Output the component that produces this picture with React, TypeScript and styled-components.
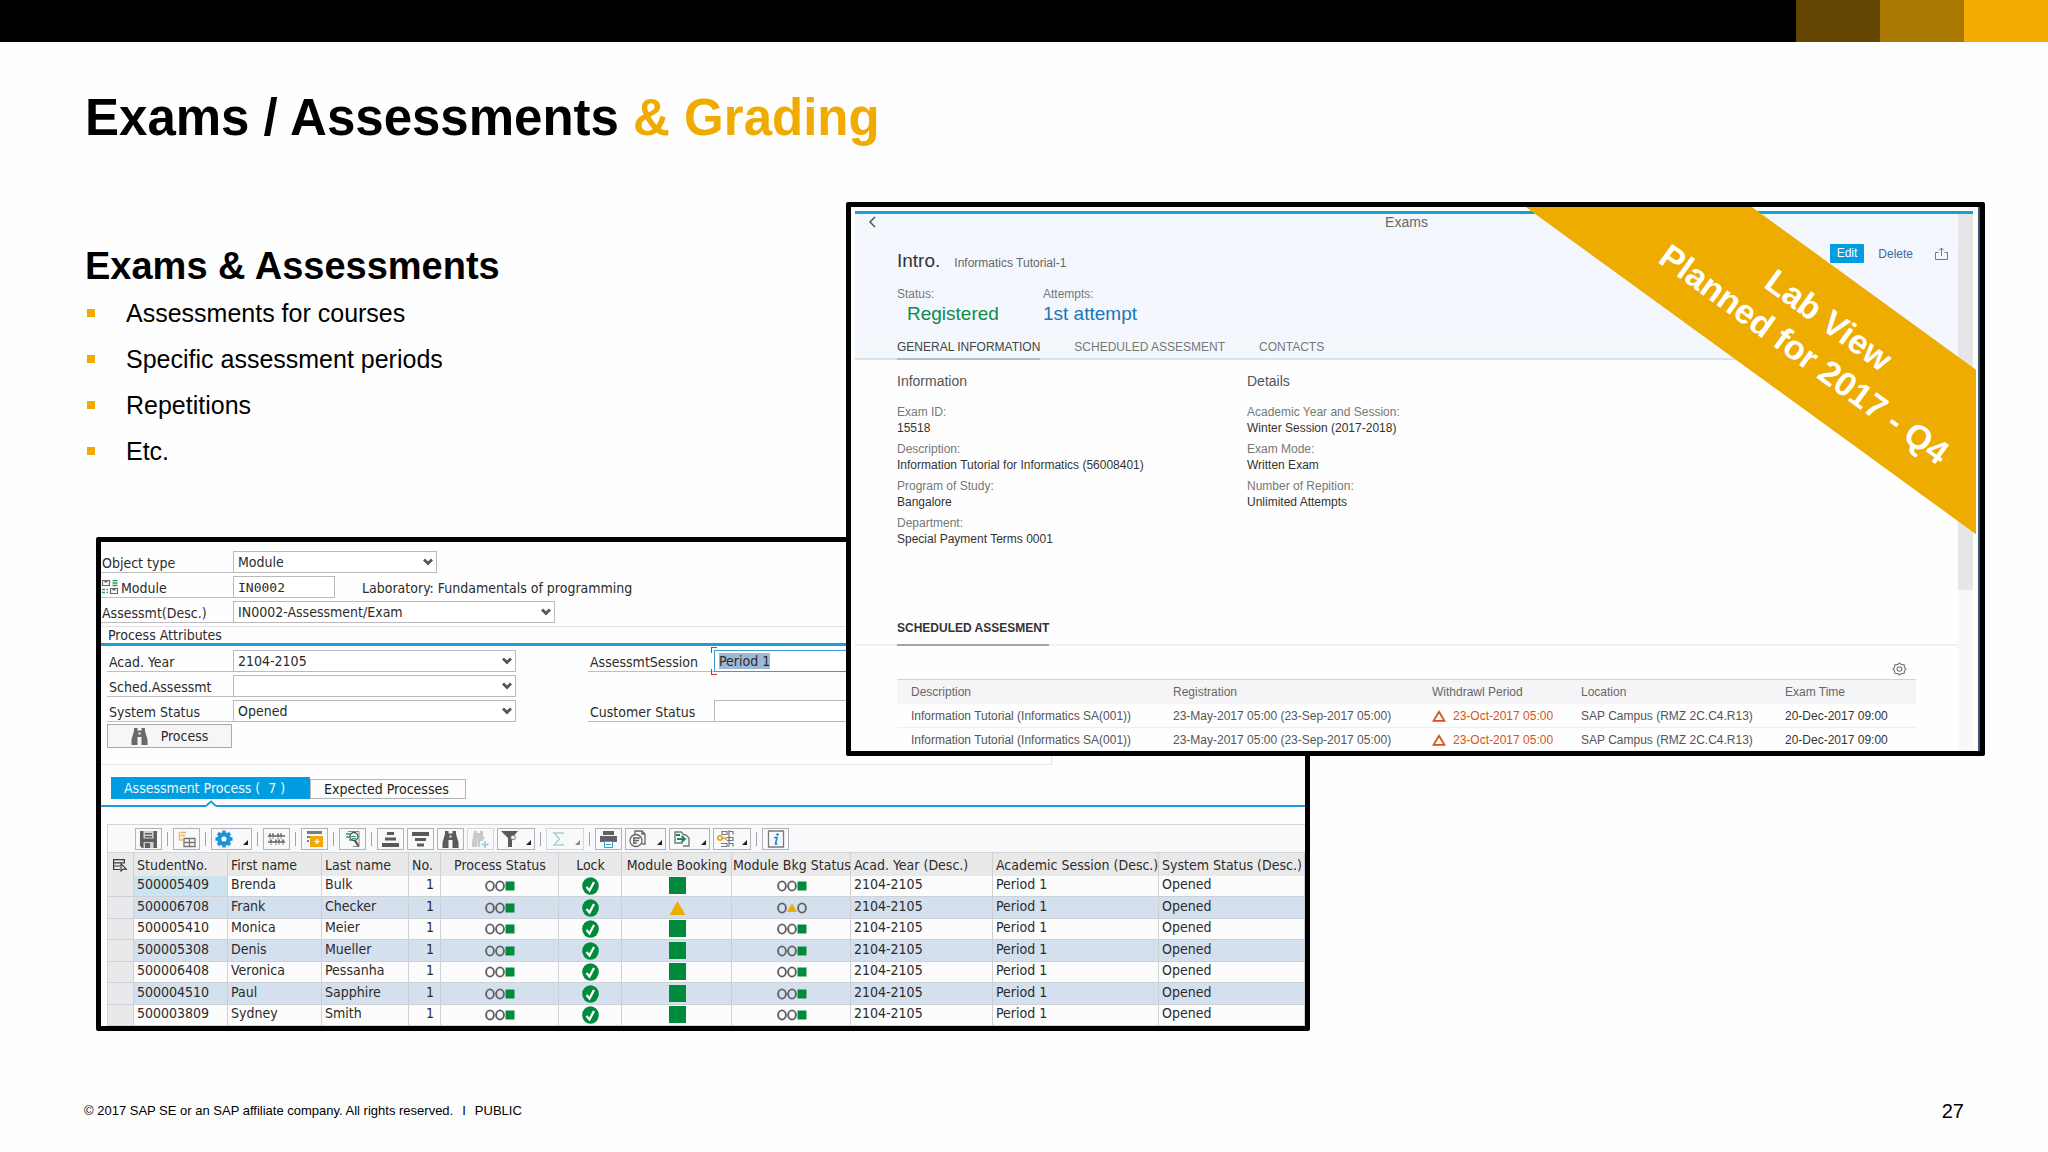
import React, { useEffect, useRef } from "react";
import styled, { createGlobalStyle } from "styled-components";

const GlobalStyle = createGlobalStyle`
  *, *::before, *::after { box-sizing: border-box; }
  body {
    margin: 0;
    background: #fefefe;
    color: #000;
    font-family: "Liberation Sans", Arial, sans-serif;
  }
  h1, h2, h3, p, ul, dl, dd { margin: 0; padding: 0; }
  button, input, select { font: inherit; color: inherit; margin: 0; }
  svg { display: block; flex: none; }
`;

/* ---------- slide ---------- */

const Slide = styled.div`
  display: flex;
  flex-direction: column;
  min-height: 100vh;
`;

const Band = styled.div`
  display: flex;
  justify-content: flex-end;
  height: 42px;
  background: #000;
`;

const Swatch = styled.span<{ $color: string }>`
  width: 84px;
  background: ${(p) => p.$color};
`;

const Title = styled.h1`
  padding: 46px 85px 0;
  font-size: 51px;
  line-height: 60px;
  font-weight: 700;
`;

const Accent = styled.span`
  color: #f0ab00;
`;

const Stage = styled.main`
  display: grid;
  grid-template-columns: 11px minmax(0, 750fr) minmax(0, 464fr) minmax(0, 675fr);
  grid-template-rows: 335px 219px auto;
  padding: 54px 63px 0 85px;
`;

const Topics = styled.section`
  grid-area: 1 / 1 / 2 / 3;
  padding-top: 42px;
`;

const TopicsHeading = styled.h2`
  font-size: 38px;
  line-height: 44px;
`;

const TopicList = styled.ul`
  padding: 2px 0 0 2px;
  list-style: none;
`;

const Topic = styled.li`
  display: flex;
  align-items: center;
  gap: 31px;
  font-size: 25px;
  line-height: 46px;

  &::before {
    content: "";
    width: 8px;
    height: 8px;
    background: #f0ab00;
  }
`;

const Footer = styled.footer`
  display: flex;
  gap: 9px;
  margin-top: auto;
  padding: 0 84px 29px 84px;
  font-size: 13px;
  line-height: 24px;
  white-space: pre;
`;

const PageNumber = styled.span`
  margin-left: auto;
  font-size: 20px;
`;

const Frame = styled.section`
  position: relative;
  overflow: hidden;
  border: 5px solid #000;
  border-radius: 2px;
  background: #fefefe;
`;

/* ---------- exam window ---------- */

const ExamFrame = styled(Frame)`
  grid-area: 1 / 3 / 3 / 5;
  z-index: 1;
  padding: 4px 7px 0 4px;
  font-size: 12px;
  line-height: 16px;
  color: #555;

  &::after {
    content: "";
    position: absolute;
    inset: 0 0 0 auto;
    width: 2px;
    background: #3d5575;
  }
`;

const ExamBody = styled.div`
  display: flex;
  border-top: 3px solid #1c9dd8;
`;

const ExamContent = styled.div`
  flex: 1;
  min-width: 0;
`;

const ScrollTrack = styled.div`
  width: 15px;
  background: #f8f8fa;
`;

const ScrollThumb = styled.div`
  height: 376px;
  background: #e6e6e8;
`;

const ObjectHeader = styled.header`
  border-bottom: 2px solid #dae3e5;
  background: linear-gradient(#f2f7fc, #f4f7fe 30%, #f4f7fe 80%, #f2f9fb);
`;

const NavBar = styled.div`
  display: grid;
  grid-template-columns: 1fr auto 1fr;
  height: 30px;
`;

const BackButton = styled.button`
  justify-self: start;
  align-self: start;
  padding: 2px 13px;
  border: 0;
  background: none;
  color: #555;
`;

const NavTitle = styled.span`
  font-size: 14px;
  color: #666;
`;

const TitleRow = styled.div`
  display: flex;
  align-items: flex-start;
  padding: 0 10px 0 42px;
`;

const ObjectTitle = styled.h2`
  padding-top: 5px;
  font-size: 19px;
  line-height: 24px;
  font-weight: 400;
  color: #333;

  small {
    margin-left: 14px;
    font-size: 12px;
    color: #666;
  }
`;

const Actions = styled.div`
  display: flex;
  align-items: center;
  gap: 14px;
  margin-left: auto;
`;

const EditButton = styled.button`
  height: 19px;
  padding: 0 7px;
  border: 0;
  border-radius: 1px;
  background: #009de0;
  color: #fff;
  line-height: 19px;
`;

const PlainButton = styled.button`
  padding: 0;
  border: 0;
  background: none;
  color: #3a6ba0;
`;

const IconButton = styled(PlainButton)`
  margin-left: 8px;
  color: #777;
`;

const Facets = styled.dl`
  display: grid;
  grid-template-columns: 146px auto;
  grid-template-rows: 16px 24px;
  grid-auto-flow: column;
  justify-content: start;
  padding: 11px 0 0 42px;

  dt { color: #777; }
`;

const FacetValue = styled.dd<{ $color: string; $inset?: boolean }>`
  padding-left: ${(p) => (p.$inset ? 10 : 0)}px;
  font-size: 19px;
  line-height: 24px;
  color: ${(p) => p.$color};
`;

const Anchors = styled.nav`
  display: flex;
  gap: 34px;
  padding: 13px 0 0 42px;
`;

const Anchor = styled.a<{ $active?: boolean }>`
  margin-bottom: -2px;
  padding-bottom: 3px;
  border-bottom: 2px solid ${(p) => (p.$active ? "#b4bec2" : "transparent")};
  color: ${(p) => (p.$active ? "#444" : "#777")};
  text-decoration: none;
`;

const InfoColumns = styled.div`
  display: grid;
  grid-template-columns: 350px 1fr;
  min-height: 260px;
  padding: 13px 0 0 42px;
`;

const InfoHeading = styled.h3`
  margin-bottom: 15px;
  font-size: 14px;
  line-height: 16px;
  font-weight: 400;
  color: #555;
`;

const InfoList = styled.dl`
  dt { color: #777; }
  dd { margin-bottom: 5px; color: #333; }
`;

const SectionHead = styled.div`
  display: flex;
  padding-left: 42px;
  border-bottom: 2px solid #f1f1f3;
`;

const SectionTitle = styled.h3`
  margin-bottom: -2px;
  padding-bottom: 8px;
  border-bottom: 2px solid #a3a3a3;
  font-size: 12px;
  line-height: 16px;
  color: #333;
`;

const TableTools = styled.div`
  display: flex;
  align-items: flex-end;
  justify-content: flex-end;
  height: 33px;
  padding: 0 51px 3px 0;
`;

const ExamTable = styled.table`
  width: calc(100% - 84px);
  margin-left: 42px;
  border-spacing: 0;
  table-layout: fixed;
  white-space: nowrap;

  th {
    height: 25px;
    padding: 0 0 0 14px;
    border-top: 1px solid #d2d2d4;
    background: #f5f5f8;
    font-weight: 400;
    text-align: left;
    color: #666;
  }
  td {
    height: 24px;
    padding: 0 0 0 14px;
    border-bottom: 1px solid #efeff1;
  }
  td:last-child { color: #333; }
`;

const Warning = styled.span`
  display: flex;
  align-items: center;
  gap: 7px;
  color: #d4541a;
`;

const RibbonClip = styled.div`
  position: absolute;
  inset: 0 4px 0 0;
  overflow: hidden;
  pointer-events: none;
`;

const Ribbon = styled.p`
  position: absolute;
  top: 63px;
  right: -191px;
  display: flex;
  align-items: center;
  justify-content: center;
  width: 700px;
  height: 133px;
  background: #eeab00;
  color: #fff;
  font-size: 34px;
  line-height: 42px;
  font-weight: 700;
  text-align: center;
  transform: rotate(36deg);
`;

/* ---------- process window ---------- */

const ProcessFrame = styled(Frame)`
  grid-area: 2 / 2 / 4 / 4;
  padding-top: 9px;
  font-family: "DejaVu Sans Condensed", "DejaVu Sans", Tahoma, sans-serif;
  font-size: 14px;
  line-height: 16px;
  color: #2b2b2b;
  white-space: nowrap;
`;

const FieldStack = styled.div<{ $inset?: boolean }>`
  display: flex;
  flex-direction: column;
  gap: 3px;
  padding-left: ${(p) => (p.$inset ? 6 : 0)}px;
`;

const FieldRow = styled.div`
  display: flex;
  height: 22px;
`;

const FieldLabel = styled.label<{ $width: number; $inset?: boolean }>`
  display: flex;
  align-items: center;
  gap: 3px;
  width: ${(p) => p.$width}px;
  padding-left: ${(p) => (p.$inset ? 2 : 1)}px;
  padding-top: 2px;
  border-bottom: 1px solid #bdbdc2;
`;

const SelectBox = styled.span<{ $width: number }>`
  display: grid;
  align-items: center;
  width: ${(p) => p.$width}px;

  select {
    grid-area: 1 / 1;
    width: 100%;
    height: 22px;
    padding: 0 4px;
    border: 1px solid #b9b9be;
    border-radius: 0;
    background: #fff;
    appearance: none;
  }
  svg {
    grid-area: 1 / 1;
    justify-self: end;
    margin-right: 4px;
    pointer-events: none;
  }
`;

const TextInput = styled.input<{ $width: number }>`
  width: ${(p) => p.$width}px;
  height: 22px;
  padding: 0 4px;
  border: 1px solid #b9b9be;
  border-radius: 0;
  background: #fff;
`;

const CodeInput = styled(TextInput)`
  font-family: "DejaVu Sans Mono", "Liberation Mono", monospace;
  font-size: 13px;
`;

const FocusBox = styled.span`
  position: relative;
  display: flex;

  &::before, &::after {
    content: "";
    position: absolute;
    left: -3px;
    width: 6px;
    height: 6px;
    border-left: 1px solid #d9302c;
  }
  &::before { top: -3px; border-top: 1px solid #d9302c; }
  &::after { bottom: -3px; border-bottom: 1px solid #d9302c; }

  input {
    border-color: #3d9bd3;
    outline: 0;
  }
  input::selection { background: #9db8d8; color: #2b2b2b; }
`;

const FieldNote = styled.span`
  padding: 4px 0 0 27px;
`;

const Spacer = styled.span`
  width: 72px;
`;

const AttributeBox = styled.div`
  width: 951px;
  height: 139px;
  margin-top: 3px;
  border: 1px solid #e4e2e8;
  border-left: 0;
`;

const BoxTitle = styled.h3`
  margin-bottom: 4px;
  padding-left: 7px;
  border-bottom: 3px solid #1c9dd8;
  font-size: 14px;
  line-height: 16px;
  font-weight: 400;
`;

const ProcessButton = styled.button`
  display: flex;
  align-items: center;
  justify-content: center;
  gap: 13px;
  width: 125px;
  height: 24px;
  margin: 2px 0 0 6px;
  padding: 0;
  border: 1px solid #a9a9ad;
  background: #f6f5f8;
`;

const TabBar = styled.div`
  display: flex;
  align-items: flex-end;
  height: 35px;
  padding: 0 0 1px 10px;
`;

const Tab = styled.button<{ $active?: boolean }>`
  height: ${(p) => (p.$active ? 22 : 20)}px;
  width: ${(p) => (p.$active ? 199 : 156)}px;
  padding: 0 0 0 13px;
  border: ${(p) => (p.$active ? 0 : "1px solid #b4b4b8")};
  background: ${(p) => (p.$active ? "#009de0" : "#fdfdfd")};
  color: ${(p) => (p.$active ? "#eef8fd" : "#1e1e1e")};
  text-align: left;
  white-space: pre;
`;

const TabRule = styled.div`
  display: flex;
  align-items: flex-end;
  height: 7px;

  &::before, &::after {
    content: "";
    height: 2px;
    background: #1c9dd8;
  }
  &::before { width: 105px; }
  &::after { flex: 1; }
`;

const Grid = styled.div`
  margin: 17px 0 0 6px;
  border-top: 1px solid #d3d5d8;
  border-left: 1px solid #d3d5d8;
  background: #f8f9fb;
`;

const Toolbar = styled.div`
  display: flex;
  gap: 3px;
  height: 27px;
  padding: 3px 0 0 27px;
`;

const ToolButton = styled.button<{ $menu?: boolean; $wide?: boolean }>`
  position: relative;
  display: flex;
  align-items: center;
  justify-content: ${(p) => (p.$menu ? "flex-start" : "center")};
  width: ${(p) => (p.$menu ? (p.$wide ? 41 : 38) : 27)}px;
  height: 22px;
  padding: ${(p) => (p.$menu ? "0 0 0 3px" : 0)};
  border: 1px solid #b2b2b6;
  background: #f8f9fb;

  &:disabled { opacity: 0.5; }
  &::after {
    content: "";
    display: ${(p) => (p.$menu ? "block" : "none")};
    position: absolute;
    right: 3px;
    bottom: 4px;
    border-left: 5px solid transparent;
    border-bottom: 5px solid #222;
  }
`;

const Divider = styled.span`
  width: 1px;
  height: 14px;
  margin: 4px 2px 0;
  background: #a3a3a8;
`;

const StudentTable = styled.table`
  width: 100%;
  border-collapse: separate;
  border-spacing: 0;
  table-layout: fixed;
  text-align: left;

  th {
    height: 24px;
    padding: 1px 0 0 3px;
    border-top: 1px solid #d3d5d8;
    border-right: 1px solid #cfd0d3;
    background: #e9e9ea;
    font-weight: 400;
  }
  td {
    height: 21px;
    padding: 0 0 4px 3px;
    border-right: 1px solid #cdd0d5;
    border-bottom: 1px solid #cdd0d5;
    background: #fcfcfc;
  }
  tr:nth-child(even) td {
    height: 22px;
    background: #d5e0ef;
  }
  tbody tr td:first-child, tbody tr:nth-child(even) td:first-child {
    background: #e9e9eb;
  }
  tbody tr:first-child td:nth-child(2) { background: #cbe3ee; }
  th:nth-child(n + 6):nth-child(-n + 9) { padding-left: 1px; text-align: center; }
  th:nth-child(9) { padding-left: 0; }
  td:nth-child(5) { padding-right: 6px; text-align: right; }
  td:nth-child(n + 6):nth-child(-n + 9) { padding: 0 0 0 1px; }
  td svg { margin: 0 auto; }
  th:first-child { padding-left: 5px; }
`;

/* ---------- icons ---------- */

const Chevron = () => (
  <svg width="10" height="8" viewBox="0 0 10 8" fill="none" stroke="#555" strokeWidth="2.8">
    <path d="M1 1.5l4 4 4-4" />
  </svg>
);

const BackIcon = () => (
  <svg width="8" height="12" viewBox="0 0 8 12" fill="none" stroke="currentColor" strokeWidth="1.5">
    <path d="M7 1L2 6l5 5" />
  </svg>
);

const ShareIcon = () => (
  <svg width="13" height="13" viewBox="0 0 13 13" fill="none" stroke="currentColor" strokeWidth="1">
    <path d="M3.5 5.5h-3v7h12v-7h-3M6.5 9V1M4 3.5L6.5 1 9 3.5" />
  </svg>
);

const SettingsIcon = () => (
  <svg width="15" height="14" viewBox="0 0 24 24" preserveAspectRatio="none" fill="none" stroke="currentColor" strokeWidth="1.800">
    <circle cx="12" cy="12" r="3.800" />
    <path d="M12 1.500l2.700 2.600 4.700.5.600 4.700 2.500 2.700-2.500 2.700-.6 4.700-4.700.5L12 22.500l-2.700-2.600-4.700-.5-.6-4.700L1.500 12 4 9.300l.6-4.700 4.700-.5z" />
  </svg>
);

const WarningIcon = () => (
  <svg width="14" height="12" viewBox="0 0 14 12" fill="none" stroke="currentColor" strokeWidth="1.8">
    <path d="M7 1.8l5.4 9H1.6z" />
  </svg>
);

const ModuleIcon = () => (
  <svg width="16" height="15" viewBox="0 0 16 15" fill="none" stroke="#666">
    <path d="M.5 .5h7v5h-7zM8.500 8.500h7v5h-7z" strokeWidth="1.200" />
    <path d="M2.500 1.500h3M10.500 9.500h3" strokeWidth="2" />
    <path d="M10.500 .5h5M10.500 3h5M10.500 5.500h5M0 9.500h3M0 12.500h3M4.500 9.500h1.500M4.500 12.500h1.500" stroke="#2f9b62" strokeWidth="1.300" />
  </svg>
);

const Binoculars = ({ color = "#6a6a6c" }: { color?: string }) => (
  <svg width="17" height="17" viewBox="0 0 17 17" fill={color}>
    <path d="M3 0h3.500v2.500h4V0H14v3l2.500 8.500V17h-6V9h-4v8h-6v-5.500L3 3z" />
    <path d="M7.500 4.500h2v2h-2z" fill="#f6f5f8" />
  </svg>
);

const SaveIcon = () => (
  <svg width="17" height="17" viewBox="0 0 17 17">
    <path d="M0 0h17v17H2l-2-2z" fill="#5e5e60" />
    <path d="M3.500 0h10v7.500h-10zM3.500 11h10v6h-10z" fill="#cfd0d2" />
    <path d="M5 2h7v1.500H5zM5 5h7v1.500H5zM5 12h5v5H5z" fill="#5e5e60" />
  </svg>
);

const DetailIcon = () => (
  <svg width="18" height="17" viewBox="0 0 18 17" fill="none">
    <path d="M1.500 1v9" stroke="#f2c26a" strokeWidth="1.800" />
    <path d="M3 1.500h5M3 4.500h4M3 9h2" stroke="#eeb14a" strokeWidth="1.300" />
    <path d="M6 7.500h11v8H6zM6 11.500h11M11.500 7.500v8" stroke="#777" strokeWidth="1.300" />
  </svg>
);

const GearIcon = () => (
  <svg width="18" height="18" viewBox="0 0 18 18">
    <circle cx="9" cy="9" r="4.700" fill="none" stroke="#1a93d6" strokeWidth="4.200" />
    <g stroke="#1a93d6" strokeWidth="3.400">
      <path d="M9 .5v3M9 14.500v3M.5 9h3M14.500 9h3M3 3l2 2M13 13l2 2M15 3l-2 2M5 13l-2 2" />
    </g>
  </svg>
);

const SortListIcon = () => (
  <svg width="17" height="14" viewBox="0 0 17 14" fill="none" stroke="#666" strokeWidth="1.300">
    <path d="M0 4h17M0 10h17" />
    <path d="M2 1.500v5M5 1.500v5M10 1.500v5M13 1.500v5M3 7.500v5M8 7.500v5M11 7.500v5M15 7.500v5" strokeWidth="1.800" strokeDasharray="1.500 .8" />
  </svg>
);

const LayoutIcon = () => (
  <svg width="18" height="18" viewBox="0 0 18 18">
    <path d="M1 1h15v3H1zM1 6h3v2H1zM1 10h2v2H1z" fill="#7b7b7d" />
    <path d="M4 6h13v11H4z" fill="#f0a90b" />
    <path d="M11 9v5M8.500 11.500h5" stroke="#fff" strokeWidth="1.500" />
  </svg>
);

const DetailsSearchIcon = () => (
  <svg width="18" height="18" viewBox="0 0 18 18" fill="none">
    <path d="M4 1.500h11v15H9" stroke="#888" />
    <path d="M2 4h5M2 7h4M5 10h4" stroke="#2d9a61" strokeWidth="1.300" />
    <circle cx="10" cy="6.500" r="4" stroke="#555" strokeWidth="1.300" />
    <path d="M10.500 10l4 6" stroke="#555" strokeWidth="2.200" />
    <path d="M7 6.500h5M8 8.500h4" stroke="#2d9a61" />
  </svg>
);

const SortAscIcon = () => (
  <svg width="17" height="15" viewBox="0 0 17 15" fill="#5a5a5c">
    <path d="M5 0h7v3H5zM3 5.500h11v3H3zM0 11h17v4H0z" />
  </svg>
);

const SortDescIcon = () => (
  <svg width="17" height="15" viewBox="0 0 17 15" fill="#5a5a5c">
    <path d="M0 0h17v4H0zM3 6h11v3H3zM5 11.500h7v3H5z" />
  </svg>
);

const FindNextIcon = () => (
  <svg width="18" height="17" viewBox="0 0 18 17" fill="#9b9b9d">
    <path d="M2 0h3v2h3V0h3v4l2 4h-2v2H8v6H6V8l-1 8H0v-5z" />
    <path d="M13 10v7M9.500 13.500h7" stroke="#3bb0c9" strokeWidth="1.800" />
  </svg>
);

const FilterIcon = () => (
  <svg width="17" height="18" viewBox="0 0 17 18">
    <path d="M0 1h17L11 8v9H7V8z" fill="#5a5a5c" />
    <circle cx="12" cy="7.500" r="2.300" fill="#f8f9fb" stroke="#777" />
  </svg>
);

const SumIcon = () => (
  <svg width="18" height="16" viewBox="0 0 18 16" fill="none" stroke="#5cab98" strokeWidth="1.400">
    <path d="M13 3.500V2H4l5.500 6L4 14h9v-1.500" />
  </svg>
);

const PrintIcon = () => (
  <svg width="17" height="17" viewBox="0 0 17 17" fill="#626264">
    <path d="M3 0h11v4H3zM0 5h17v6H0z" />
    <path d="M4.500 10.500h8v6h-8z" fill="#fff" stroke="#3a9bd0" />
    <path d="M6 13.500h5" stroke="#3a9bd0" />
    <path d="M2 4.500h13" stroke="#f8f9fb" />
  </svg>
);

const ViewIcon = () => (
  <svg width="18" height="18" viewBox="0 0 18 18" fill="none" stroke="#666" strokeWidth="1.300">
    <path d="M6 4V1h7l3 3v10h-3M13 1v3h3" />
    <circle cx="7" cy="10.500" r="6" />
    <path d="M4 8h7M4 10.500h6M4 13h4M5 7v7" />
  </svg>
);

const ExportIcon = () => (
  <svg width="18" height="18" viewBox="0 0 18 18" fill="none">
    <path d="M10 13H2V2h6l3 3M11 5h2l3 3v8h-6" stroke="#777" strokeWidth="1.400" />
    <path d="M3 5h4M4 9h7M8.500 6l3.500 3-3.500 3" stroke="#188a4d" strokeWidth="1.800" />
  </svg>
);

const LayoutSelectIcon = () => (
  <svg width="18" height="18" viewBox="0 0 18 18" fill="none">
    <path d="M5 1.500h5v3H5zM12 1.500h4v3M10 7.500h6v3h-6M4 16.500h6v-3H4M12 13.500h4v3M12 0v17" stroke="#777" strokeWidth="1.200" />
    <circle cx="3" cy="8" r="2.200" stroke="#eba020" strokeWidth="1.700" />
    <path d="M5 8h4v2" stroke="#eba020" strokeWidth="1.700" />
  </svg>
);

const InfoIcon = () => (
  <svg width="18" height="18" viewBox="0 0 18 18" fill="none">
    <path d="M1.500 1h15v16h-15z" stroke="#7a7a7d" strokeWidth="1.300" />
    <path d="M8 7.500h2L8.500 14h2M7 7.500h2" stroke="#1b8ccb" strokeWidth="1.700" />
    <circle cx="10.500" cy="4.500" r="1.300" fill="#1b8ccb" />
  </svg>
);

const SelectAllIcon = () => (
  <svg width="14" height="13" viewBox="0 0 14 13" fill="none" stroke="#3c3c3e" strokeWidth="1.200">
    <path d="M7 10.500H.6V.6h10.800v4M.6 3.800h10.800M.6 7H7" />
    <path d="M8 5v7l2-2 3.500.3z" fill="#fff" />
  </svg>
);

const LockIcon = () => (
  <svg width="17" height="18" viewBox="0 0 17 18">
    <ellipse cx="8.500" cy="9" rx="8.300" ry="8.700" fill="#008a3b" />
    <path d="M4.500 10l3 3.500L12 5" fill="none" stroke="#fff" strokeWidth="2.300" />
  </svg>
);

const BookingIcon = ({ warn }: { warn?: boolean }) => (
  <svg width="17" height="18" viewBox="0 0 17 18">
    {warn ? <path d="M8.500 2L16.500 16H.5z" fill="#f0ab00" /> : <path d="M0 0h17v17H0z" fill="#008a3b" />}
  </svg>
);

const LightsIcon = ({ warn }: { warn?: boolean }) => (
  <svg width="30" height="12" viewBox="0 0 30 12" fill="none" stroke="#626264" strokeWidth="1.900">
    <ellipse cx="5" cy="6" rx="3.900" ry="4.600" />
    {warn ? (
      <>
        <path d="M15 1.500l5 8.500H10z" fill="#f0ab00" stroke="none" />
        <ellipse cx="25" cy="6" rx="3.900" ry="4.600" />
      </>
    ) : (
      <>
        <ellipse cx="15" cy="6" rx="3.900" ry="4.600" />
        <path d="M20.500 1.500h9v9h-9z" fill="#008a3b" stroke="none" />
      </>
    )}
  </svg>
);

/* ---------- data ---------- */

const topics = ["Assessments for courses", "Specific assessment periods", "Repetitions", "Etc."];

const information = [
  ["Exam ID:", "15518"],
  ["Description:", "Information Tutorial for Informatics (56008401)"],
  ["Program of Study:", "Bangalore"],
  ["Department:", "Special Payment Terms 0001"],
];

const details = [
  ["Academic Year and Session:", "Winter Session (2017-2018)"],
  ["Exam Mode:", "Written Exam"],
  ["Number of Repition:", "Unlimited Attempts"],
];

const students = [
  ["500005409", "Brenda", "Bulk"],
  ["500006708", "Frank", "Checker"],
  ["500005410", "Monica", "Meier"],
  ["500005308", "Denis", "Mueller"],
  ["500006408", "Veronica", "Pessanha"],
  ["500004510", "Paul", "Sapphire"],
  ["500003809", "Sydney", "Smith"],
];

const studentColumns = [
  "StudentNo.", "First name", "Last name", "No.", "Process Status", "Lock", "Module Booking",
  "Module Bkg Status", "Acad. Year (Desc.)", "Academic Session (Desc.)", "System Status (Desc.)",
];

const studentWidths = [26, 94, 94, 87, 32, 118, 63, 110, 119, 142, 166];

type Tool = { name: string; icon: React.ReactNode; menu?: boolean; wide?: boolean; off?: boolean } | null;

const tools: Tool[] = [
  { name: "Save", icon: <SaveIcon /> },
  null,
  { name: "Details", icon: <DetailIcon /> },
  null,
  { name: "Settings", icon: <GearIcon />, menu: true, wide: true },
  null,
  { name: "Columns", icon: <SortListIcon /> },
  null,
  { name: "Add layout", icon: <LayoutIcon /> },
  null,
  { name: "Inspect", icon: <DetailsSearchIcon /> },
  null,
  { name: "Sort ascending", icon: <SortAscIcon /> },
  { name: "Sort descending", icon: <SortDescIcon /> },
  { name: "Find", icon: <Binoculars color="#5a5a5c" /> },
  { name: "Find next", icon: <FindNextIcon />, off: true },
  { name: "Filter", icon: <FilterIcon />, menu: true },
  null,
  { name: "Total", icon: <SumIcon />, menu: true, off: true },
  null,
  { name: "Print", icon: <PrintIcon /> },
  { name: "Views", icon: <ViewIcon />, menu: true, wide: true },
  { name: "Export", icon: <ExportIcon />, menu: true, wide: true },
  { name: "Choose layout", icon: <LayoutSelectIcon />, menu: true },
  null,
  { name: "Information", icon: <InfoIcon /> },
];

/* ---------- parts ---------- */

const Dropdown = ({ id, value, width }: { id: string; value: string; width: number }) => (
  <SelectBox $width={width}>
    <select id={id} defaultValue={value}>
      <option value={value}>{value}</option>
    </select>
    <Chevron />
  </SelectBox>
);

const InfoBlock = ({ title, items }: { title: string; items: string[][] }) => (
  <div>
    <InfoHeading>{title}</InfoHeading>
    <InfoList>
      {items.map(([label, value]) => (
        <React.Fragment key={label}>
          <dt>{label}</dt>
          <dd>{value}</dd>
        </React.Fragment>
      ))}
    </InfoList>
  </div>
);

const ExamWindow = () => (
  <ExamFrame aria-label="Exams">
    <ExamBody>
      <ExamContent>
        <ObjectHeader>
          <NavBar>
            <BackButton aria-label="Back"><BackIcon /></BackButton>
            <NavTitle>Exams</NavTitle>
          </NavBar>
          <TitleRow>
            <ObjectTitle>Intro.<small>Informatics Tutorial-1</small></ObjectTitle>
            <Actions>
              <EditButton>Edit</EditButton>
              <PlainButton>Delete</PlainButton>
              <IconButton aria-label="Share"><ShareIcon /></IconButton>
            </Actions>
          </TitleRow>
          <Facets>
            <dt>Status:</dt>
            <FacetValue $color="#118a48" $inset>Registered</FacetValue>
            <dt>Attempts:</dt>
            <FacetValue $color="#1a76b5">1st attempt</FacetValue>
          </Facets>
          <Anchors>
            <Anchor href="#general" $active>GENERAL INFORMATION</Anchor>
            <Anchor href="#scheduled">SCHEDULED ASSESMENT</Anchor>
            <Anchor href="#contacts">CONTACTS</Anchor>
          </Anchors>
        </ObjectHeader>
        <InfoColumns id="general">
          <InfoBlock title="Information" items={information} />
          <InfoBlock title="Details" items={details} />
        </InfoColumns>
        <SectionHead id="scheduled">
          <SectionTitle>SCHEDULED ASSESMENT</SectionTitle>
        </SectionHead>
        <TableTools>
          <IconButton aria-label="Table settings"><SettingsIcon /></IconButton>
        </TableTools>
        <ExamTable>
          <colgroup>
            <col width="262" /><col width="259" /><col width="149" /><col width="204" /><col />
          </colgroup>
          <thead>
            <tr>
              <th>Description</th><th>Registration</th><th>Withdrawl Period</th><th>Location</th><th>Exam Time</th>
            </tr>
          </thead>
          <tbody>
            {[1, 2].map((n) => (
              <tr key={n}>
                <td>Information Tutorial (Informatics SA(001))</td>
                <td>23-May-2017 05:00 (23-Sep-2017 05:00)</td>
                <td><Warning><WarningIcon />23-Oct-2017 05:00</Warning></td>
                <td>SAP Campus (RMZ 2C.C4.R13)</td>
                <td>20-Dec-2017 09:00</td>
              </tr>
            ))}
          </tbody>
        </ExamTable>
      </ExamContent>
      <ScrollTrack><ScrollThumb /></ScrollTrack>
    </ExamBody>
    <RibbonClip>
      <Ribbon><span>Lab View<br />Planned for 2017 - Q4</span></Ribbon>
    </RibbonClip>
  </ExamFrame>
);

const ProcessWindow = () => {
  const session = useRef<HTMLInputElement>(null);
  useEffect(() => {
    session.current?.focus();
    session.current?.select();
  }, []);

  return (
    <ProcessFrame aria-label="Assessment process">
      <FieldStack>
        <FieldRow>
          <FieldLabel htmlFor="object-type" $width={132}>Object type</FieldLabel>
          <Dropdown id="object-type" value="Module" width={204} />
        </FieldRow>
        <FieldRow>
          <FieldLabel htmlFor="module" $width={132}><ModuleIcon />Module</FieldLabel>
          <CodeInput id="module" defaultValue="IN0002" $width={102} />
          <FieldNote>Laboratory: Fundamentals of programming</FieldNote>
        </FieldRow>
        <FieldRow>
          <FieldLabel htmlFor="assessment" $width={132}>Assessmt(Desc.)</FieldLabel>
          <Dropdown id="assessment" value="IN0002-Assessment/Exam" width={322} />
        </FieldRow>
      </FieldStack>
      <AttributeBox>
        <BoxTitle>Process Attributes</BoxTitle>
        <FieldStack $inset>
          <FieldRow>
            <FieldLabel htmlFor="year" $width={126} $inset>Acad. Year</FieldLabel>
            <Dropdown id="year" value="2104-2105" width={283} />
            <Spacer />
            <FieldLabel htmlFor="session" $width={126} $inset>AssessmtSession</FieldLabel>
            <FocusBox>
              <TextInput id="session" ref={session} defaultValue="Period 1" $width={300} />
            </FocusBox>
          </FieldRow>
          <FieldRow>
            <FieldLabel htmlFor="scheduled-assessment" $width={126} $inset>Sched.Assessmt</FieldLabel>
            <Dropdown id="scheduled-assessment" value="" width={283} />
          </FieldRow>
          <FieldRow>
            <FieldLabel htmlFor="system-status" $width={126} $inset>System Status</FieldLabel>
            <Dropdown id="system-status" value="Opened" width={283} />
            <Spacer />
            <FieldLabel htmlFor="customer-status" $width={126} $inset>Customer Status</FieldLabel>
            <TextInput id="customer-status" $width={300} />
          </FieldRow>
        </FieldStack>
        <ProcessButton><Binoculars />Process</ProcessButton>
      </AttributeBox>
      <TabBar>
        <Tab $active>{"Assessment Process (  7 )"}</Tab>
        <Tab>Expected Processes</Tab>
      </TabBar>
      <TabRule>
        <svg width="10" height="7" viewBox="0 0 10 7" fill="none" stroke="#1c9dd8" strokeWidth="2">
          <path d="M0 6l5-4.500L10 6" />
        </svg>
      </TabRule>
      <Grid>
        <Toolbar>
          {tools.map((tool, i) =>
            tool ? (
              <ToolButton key={tool.name} aria-label={tool.name} $menu={tool.menu} $wide={tool.wide} disabled={tool.off}>
                {tool.icon}
              </ToolButton>
            ) : (
              <Divider key={i} />
            )
          )}
        </Toolbar>
        <StudentTable>
          <colgroup>
            {studentWidths.map((w, i) => <col key={i} width={w} />)}
            <col />
          </colgroup>
          <thead>
            <tr>
              <th><SelectAllIcon /></th>
              {studentColumns.map((name) => <th key={name}>{name}</th>)}
            </tr>
          </thead>
          <tbody>
            {students.map(([id, first, last], i) => (
              <tr key={id}>
                <td />
                <td>{id}</td>
                <td>{first}</td>
                <td>{last}</td>
                <td>1</td>
                <td><LightsIcon /></td>
                <td><LockIcon /></td>
                <td><BookingIcon warn={i === 1} /></td>
                <td><LightsIcon warn={i === 1} /></td>
                <td>2104-2105</td>
                <td>Period 1</td>
                <td>Opened</td>
              </tr>
            ))}
          </tbody>
        </StudentTable>
      </Grid>
    </ProcessFrame>
  );
};

export default function App() {
  return (
    <Slide>
      <GlobalStyle />
      <Band>
        <Swatch $color="#614500" />
        <Swatch $color="#a97800" />
        <Swatch $color="#f2ab00" />
      </Band>
      <Title>Exams / Assessments <Accent>&amp; Grading</Accent></Title>
      <Stage>
        <Topics>
          <TopicsHeading>Exams &amp; Assessments</TopicsHeading>
          <TopicList>
            {topics.map((topic) => <Topic key={topic}>{topic}</Topic>)}
          </TopicList>
        </Topics>
        <ExamWindow />
        <ProcessWindow />
      </Stage>
      <Footer>
        <span>© 2017 SAP SE or an SAP affiliate company. All rights reserved.</span>
        <span>I</span>
        <span>PUBLIC</span>
        <PageNumber>27</PageNumber>
      </Footer>
    </Slide>
  );
}
